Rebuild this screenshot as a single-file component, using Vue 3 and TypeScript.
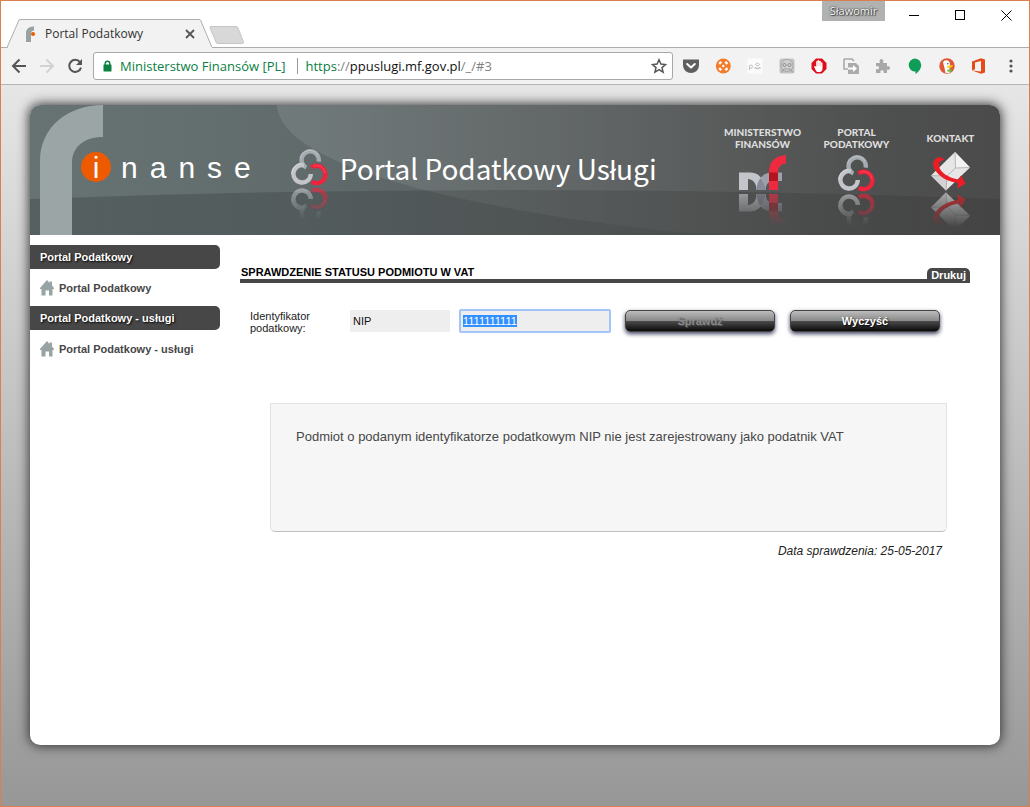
<script setup lang="ts">
import { onMounted, ref } from 'vue'

interface MenuSection {
  title: string
  link: string
}

const sections: MenuSection[] = [
  { title: 'Portal Podatkowy', link: 'Portal Podatkowy' },
  { title: 'Portal Podatkowy - usługi', link: 'Portal Podatkowy - usługi' },
]

const logoLetters: string[] = ['n', 'a', 'n', 's', 'e']

const idType = ref<string>('NIP')
const idValue = ref<string>('1111111111')
const idInput = ref<HTMLInputElement | null>(null)

function clearForm(): void {
  idValue.value = ''
  idInput.value?.focus()
}

onMounted(() => {
  idInput.value?.focus()
  idInput.value?.select()
})
</script>

<template>
  <div class="window">
    <!-- shared symbols -->
    <svg class="defs" aria-hidden="true">
      <defs>
        <linearGradient id="fade" x1="0" y1="0" x2="0" y2="1">
          <stop offset="0" stop-color="#fff" stop-opacity="0" />
          <stop offset="0.1" stop-color="#fff" stop-opacity="0" />
          <stop offset="1" stop-color="#fff" stop-opacity="0.7" />
        </linearGradient>
        <mask id="fadeMask" maskUnits="userSpaceOnUse" x="0" y="0" width="48" height="39">
          <rect width="48" height="39" fill="url(#fade)" />
        </mask>
        <symbol id="knot" viewBox="0 0 38 37" overflow="visible">
          <g fill="none" stroke-width="4.4">
            <path d="M15.3 18.6 A8.6 8.6 0 1 1 27.6 12.6" stroke="#a5abb1" />
            <path d="M13 16.3 A8.7 8.7 0 1 0 19.8 25" stroke="#c3c5c9" />
            <path d="M20.4 18.6 A8.7 8.7 0 1 1 20.8 32.6" stroke="#ef233c" />
            <path d="M22.6 17.2 A8.4 8.4 0 0 1 34 24" stroke="#ff5266" stroke-width="0.8" />
            <path d="M10 14.2 A10.5 10.5 0 0 0 0.8 25" stroke="#dfe0e2" stroke-width="0.8" />
            <path d="M9.5 9 A9.6 9.6 0 0 1 27 6" stroke="#c3c8cd" stroke-width="0.8" />
          </g>
        </symbol>
        <symbol id="mf" viewBox="0 0 48 36" overflow="visible">
          <path d="M17 35 C18 24 24 17.5 33 17.5 H43 V26 H34 C30 26 27 29 26.5 35 Z" fill="#9da0ab" />
          <path d="M0 17.5 H11 C20 17.5 25 24 26.5 35 H18 C17 28 14 24.5 9 24 V35 H0 Z" fill="#c3c5cb" />
          <path d="M21.5 23 C24.500 26 26 30 26.500 35 H17.500 C17.800 30 19 26 21.500 23 Z" fill="#868a99" />
          <path d="M30 35 V17 C30 7 36 0.5 47 0 V8.5 C42 9 39 12 39 18 V35 Z" fill="#ee2a40" />
          <path d="M30 17.5 H39 V26 H30 Z" fill="#b3141f" />
        </symbol>
        <symbol id="mail" viewBox="0 0 40 39" overflow="visible">
          <path d="M24 0 L39 15.5 L15 38.5 L0 23.5 Z" fill="#e6e6e6" />
          <path d="M24 0 L39 15.5 L25 16 Z" fill="#f3f3f3" />
          <path d="M0 23.5 L15 38.5 L17 25 Z" fill="#d2d2d2" />
          <path d="M24 0 L24.5 16 L39 15.5 M0 23.5 L16 24 L15 38.5 M24.5 16 L16 24" fill="none" stroke="#a9a9a9" stroke-width="0.8" />
          <path d="M13 8 C12 5 8 4.500 5 6.500 C1.500 9 1.500 14 4 18 C8 24.500 16 29.500 27 31 L26.500 36.500 L34.500 31.500 L30 23.500 L27.500 27.500 C18 26 9 20.500 8 14 C7.500 11 9 8.500 13 8 Z" fill="#ed1c24" />
        </symbol>
      </defs>
    </svg>

    <header class="tabstrip">
      <div class="tab">
        <svg class="tab-shape" viewBox="0 0 206 29" aria-hidden="true">
          <path d="M0 28.5 L12 1 L13 0.5 H192 L193.5 1 L205 28.5" fill="#f2f2f2" stroke="#adadad" />
          <rect x="1" y="28" width="204" height="1" fill="#f2f2f2" />
        </svg>
        <svg class="favicon" viewBox="0 0 16 16" aria-hidden="true">
          <path d="M1 16 V7 C1 3 4 0.5 9 0.5 V4.5 C7 4.5 6 5.5 6 8 V16 Z" fill="#98a2a3" />
          <circle cx="8" cy="8" r="2" fill="#ee5a00" />
        </svg>
        <span class="tab-title">Portal Podatkowy</span>
        <button class="tab-close" type="button" aria-label="Zamknij kartę">
          <svg viewBox="0 0 10 10"><path d="M1 1 L9 9 M9 1 L1 9" stroke="#555" stroke-width="1.8" /></svg>
        </button>
      </div>
      <button class="newtab" type="button" aria-label="Nowa karta">
        <svg viewBox="0 0 36 18">
          <path d="M2 0.5 H27 Q28.5 0.5 29 2 L34.5 16 Q35 17.5 33.5 17.5 H9 Q7.5 17.5 7 16 L1 2 Q0.5 0.5 2 0.5 Z" fill="#d8d8d8" stroke="#c6c6c6" />
        </svg>
      </button>
      <div class="win-controls">
        <span class="user">Sławomir</span>
        <button type="button" aria-label="Minimalizuj"><svg viewBox="0 0 11 11"><path d="M0 5.5 H10" stroke="#000" /></svg></button>
        <button type="button" aria-label="Maksymalizuj"><svg viewBox="0 0 11 11"><rect x="0.5" y="0.5" width="9" height="9" fill="none" stroke="#000" /></svg></button>
        <button type="button" aria-label="Zamknij"><svg viewBox="0 0 11 11"><path d="M0.5 0.5 L10.5 10.5 M10.5 0.5 L0.5 10.5" stroke="#000" /></svg></button>
      </div>
    </header>

    <nav class="toolbar" aria-label="Pasek narzędzi">
      <div class="nav-buttons">
        <button type="button" aria-label="Wstecz">
          <svg viewBox="0 0 16 16"><path d="M15 8 H2 M8.5 1.5 L2 8 L8.5 14.5" fill="none" stroke="#555" stroke-width="2" /></svg>
        </button>
        <button type="button" aria-label="Dalej" disabled>
          <svg viewBox="0 0 16 16"><path d="M1 8 H14 M7.5 1.5 L14 8 L7.5 14.5" fill="none" stroke="#d2d2d2" stroke-width="2" /></svg>
        </button>
        <button type="button" aria-label="Odśwież">
          <svg viewBox="0 0 16 16">
            <path d="M13 4.2 A6 6 0 1 0 14 9.6" fill="none" stroke="#555" stroke-width="2" />
            <path d="M15 1 V7 H9 Z" fill="#555" />
          </svg>
        </button>
      </div>
      <div class="omnibox">
        <svg class="lock" viewBox="0 0 9 12" aria-hidden="true">
          <path d="M2.2 5 V3.5 A2.3 2.3 0 0 1 6.8 3.5 V5" fill="none" stroke="#0b8043" stroke-width="1.4" />
          <rect x="0.5" y="4.5" width="8" height="7" rx="0.5" fill="#0b8043" />
        </svg>
        <span class="issuer">Ministerstwo Finansów [PL]</span>
        <span class="url"><span class="scheme">https</span>://<span class="host">ppuslugi.mf.gov.pl</span>/_/#3</span>
        <button class="star" type="button" aria-label="Dodaj zakładkę">
          <svg viewBox="0 0 16 16"><path d="M8 1.8 L9.9 6.1 L14.5 6.5 L11 9.6 L12.1 14.2 L8 11.7 L3.9 14.2 L5 9.6 L1.5 6.5 L6.1 6.1 Z" fill="none" stroke="#555" stroke-width="1.5" /></svg>
        </button>
      </div>
      <div class="extensions">
        <button type="button" aria-label="Pocket">
          <svg viewBox="0 0 16 16">
            <path d="M0 1.5 H16 V7 C16 12 12 15 8 15 S0 12 0 7 Z" fill="#5e5e60" />
            <path d="M4.2 6 L8 9.6 L11.8 6" fill="none" stroke="#fff" stroke-width="2" stroke-linecap="round" stroke-linejoin="round" />
          </svg>
        </button>
        <button type="button" aria-label="Koło ratunkowe">
          <svg viewBox="0 0 16 16">
            <circle cx="8.3" cy="8" r="7.5" fill="#f47b2a" />
            <g fill="none" stroke="#fff" stroke-width="2.4">
              <path d="M4.2 6 L6.2 3.8 M10.4 3.8 L12.4 6 M12.4 10 L10.4 12.2 M6.2 12.2 L4.2 10" />
            </g>
            <circle cx="8.3" cy="8" r="1.2" fill="#fff" />
          </svg>
        </button>
        <button type="button" aria-label="Rozszerzenie strony">
          <svg viewBox="0 0 16 16">
            <rect x="0.5" y="0.5" width="15" height="15" fill="#fbfbfb" />
            <path d="M2.5 12 V7.5 Q5.5 6 5.5 8.5 T2.5 10 M7 10 H14 M8 7 Q10.5 3 13 7 M8 9 Q10.5 13 13 9 M9 7.5 H12" fill="none" stroke="#c2c2c2" />
          </svg>
        </button>
        <button type="button" aria-label="Robot">
          <svg viewBox="0 0 16 16">
            <rect x="0.5" y="0.5" width="15" height="15" rx="2.5" fill="#c3c3c3" />
            <circle cx="8" cy="7.5" r="6" fill="#d2d2d2" stroke="#9c9c9c" stroke-width="0.8" />
            <circle cx="5.5" cy="7" r="1.6" fill="none" stroke="#8c8c8c" />
            <circle cx="10.5" cy="7" r="1.6" fill="none" stroke="#8c8c8c" />
            <path d="M5 11 H11 M2 14.5 L5 11 M14 14.5 L11 11" stroke="#999" />
          </svg>
        </button>
        <button type="button" aria-label="Blokada reklam">
          <svg viewBox="0 0 16 16">
            <path d="M5 0.5 H11 L15.5 5 V11 L11 15.5 H5 L0.5 11 V5 Z" fill="#dd0f1c" />
            <path d="M5 13 L3 8.500 Q4.200 7.200 5.200 9 V3.600 Q6 2.600 6.600 3.600 V2.500 Q7.400 1.700 8.200 2.500 V3 Q9.200 2.200 9.800 3.300 V4.600 Q10.800 3.800 11.500 5 V10 Q11.500 14 8.500 14 H7 Q5.500 14 5 13 Z" fill="#fff" />
            <path d="M6.7 4 V8 M8.2 3.5 V8 M9.8 4.5 V8" stroke="#e9a0a4" stroke-width="0.5" />
          </svg>
        </button>
        <button type="button" aria-label="Przenieś kartę">
          <svg viewBox="0 0 16 16">
            <path d="M1 1 H9 L11 3 M1 1 V11 H5" fill="none" stroke="#a9a9a9" stroke-width="1.6" />
            <path d="M5 5 H13 L16 8 V16 H5 Z" fill="#ababab" />
            <path d="M5 9.5 H10 V7 L14 10.5 L10 14 V11.5 H5 Z" fill="#fff" />
          </svg>
        </button>
        <button type="button" aria-label="Rozszerzenia">
          <svg viewBox="0 0 16 16"><path d="M1 5 H5 C4.5 4 4.3 1 6.5 1 S8.5 4 8 5 H12 V8.5 C13 8 15 8 15 10 S13 12 12 11.5 V15 H8.5 C9 13.5 8.5 12.3 7 12.3 S5 13.5 5.5 15 H1 V11 C3 11.5 4 11 4 9.7 S3 8 1 8.5 Z" fill="#a8a8a8" /></svg>
        </button>
        <button type="button" aria-label="Hangouts">
          <svg viewBox="0 0 16 16"><path d="M7.5 0.5 A6.6 6.6 0 0 1 14.2 7 C14.2 11 11.5 14 8.5 16 V13.6 H7.5 A6.6 6.6 0 0 1 7.5 0.5 Z" fill="#0f9d58" /></svg>
        </button>
        <button type="button" aria-label="DuckDuckGo">
          <svg viewBox="0 0 16 16">
            <circle cx="8" cy="8" r="7.7" fill="#de5833" />
            <path d="M4 4.500 Q4.500 1.800 8 2.200 Q11 3 11 7 L10.500 10 L11 14.5 Q8.5 15.500 6.5 14.8 L5 8 Z" fill="#fff" />
            <circle cx="8.8" cy="5.8" r="0.8" fill="#2d4f8e" />
            <path d="M8 8 Q11 7 14 7.2 Q13.500 9.800 8.5 10 Z" fill="#fdd20a" />
            <path d="M8 12 L12.5 10.8 V14 L8.5 13.5 Z" fill="#65bc46" />
          </svg>
        </button>
        <button type="button" aria-label="Office">
          <svg viewBox="0 0 16 16"><path d="M1 3.5 L10 0.3 L14 1.5 V14.5 L10 15.7 L1 12.5 L10 13.5 V3 L4 4.4 V11.2 L1 12.5 Z" fill="#e64a19" /></svg>
        </button>
      </div>
      <button class="menu" type="button" aria-label="Menu">
        <svg viewBox="0 0 16 16"><g fill="#555"><circle cx="8" cy="3" r="1.6" /><circle cx="8" cy="8" r="1.6" /><circle cx="8" cy="13" r="1.6" /></g></svg>
      </button>
    </nav>

    <main class="page">
      <div class="card">
        <div class="banner">
          <svg class="banner-bg" viewBox="0 0 970 130" preserveAspectRatio="none" aria-hidden="true">
            <defs>
              <linearGradient id="base" x1="0" y1="0" x2="1" y2="0">
                <stop offset="0" stop-color="#677373" />
                <stop offset="0.28" stop-color="#616b6c" />
                <stop offset="0.65" stop-color="#575a5a" />
                <stop offset="0.85" stop-color="#4f5050" />
                <stop offset="1" stop-color="#4b4b4b" />
              </linearGradient>
              <linearGradient id="sheen" gradientUnits="userSpaceOnUse" x1="247" y1="0" x2="860" y2="0">
                <stop offset="0" stop-color="#fff" stop-opacity="0.1" />
                <stop offset="1" stop-color="#fff" stop-opacity="0" />
              </linearGradient>
              <linearGradient id="floor" x1="0" y1="0" x2="1" y2="0">
                <stop offset="0" stop-color="#000" stop-opacity="0.17" />
                <stop offset="1" stop-color="#000" stop-opacity="0.09" />
              </linearGradient>
            </defs>
            <rect width="970" height="130" fill="url(#base)" />
            <path d="M247 0 C249 28 285 58 407 88 C500 110 620 127 700 130 H970 V0 Z" fill="url(#sheen)" />
            <path d="M0 94 Q485 76 970 94 V130 H0 Z" fill="url(#floor)" />
          </svg>
          <a class="logo" href="#" aria-label="finanse">
            <svg class="logo-f" viewBox="0 0 64 130" aria-hidden="true">
              <path d="M0 130 V56 C0 22 28 0 63 0 V32 C44 32 32 42 32 58 V130 Z" fill="#9ca5a6" />
            </svg>
            <span class="logo-i">i</span>
            <span class="logo-rest"><span v-for="(l, i) in logoLetters" :key="i">{{ l }}</span></span>
          </a>
          <div class="brand">
            <svg class="knot" viewBox="0 0 38 76" aria-hidden="true">
              <use href="#knot" width="38" height="37" />
              <g transform="translate(0 75) scale(1 -1)"><g mask="url(#fadeMask)"><use href="#knot" width="38" height="37" /></g></g>
            </svg>
            <h1>Portal Podatkowy Usługi</h1>
          </div>
          <ul class="links">
            <li>
              <a href="#">
                <span class="label">MINISTERSTWO<br />FINANSÓW</span>
                <svg width="48" height="76" viewBox="0 0 48 76" aria-hidden="true">
                  <use href="#mf" width="48" height="36" />
                  <g transform="translate(0 74) scale(1 -1)"><g mask="url(#fadeMask)"><use href="#mf" width="48" height="36" /></g></g>
                </svg>
              </a>
            </li>
            <li>
              <a href="#">
                <span class="label">PORTAL<br />PODATKOWY</span>
                <svg width="38" height="76" viewBox="0 0 38 76" aria-hidden="true">
                  <use href="#knot" width="38" height="37" />
                  <g transform="translate(0 75) scale(1 -1)"><g mask="url(#fadeMask)"><use href="#knot" width="38" height="37" /></g></g>
                </svg>
              </a>
            </li>
            <li>
              <a href="#">
                <span class="label">KONTAKT</span>
                <svg class="mail" width="40" height="80" viewBox="0 0 40 80" aria-hidden="true">
                  <use href="#mail" width="40" height="39" />
                  <g transform="translate(0 79) scale(1 -1)"><g mask="url(#fadeMask)"><use href="#mail" width="40" height="39" /></g></g>
                </svg>
              </a>
            </li>
          </ul>
        </div>

        <div class="body">
          <aside class="side">
            <section v-for="s in sections" :key="s.title">
              <h2>{{ s.title }}</h2>
              <a href="#">
                <svg viewBox="0 0 14 16" aria-hidden="true"><path d="M7 0 L9.5 3 V1.5 H12 V5.5 L14 8 V9 H12.5 V15.5 H9 V10.5 H5.5 V15.5 H1.5 V9 H0 V8 Z" fill="#98a3a3" /></svg>
                <span>{{ s.link }}</span>
              </a>
            </section>
          </aside>

          <section class="content">
            <div class="title-row">
              <h2>SPRAWDZENIE STATUSU PODMIOTU W VAT</h2>
              <a class="print" href="#">Drukuj</a>
            </div>
            <form class="form" @submit.prevent>
              <label for="tax-id">Identyfikator podatkowy:</label>
              <select v-model="idType" class="type" aria-label="Rodzaj identyfikatora">
                <option>NIP</option>
              </select>
              <input id="tax-id" ref="idInput" v-model="idValue" class="value" type="text" />
              <button class="action" type="submit" disabled>Sprawdź</button>
              <button class="action" type="button" @click="clearForm">Wyczyść</button>
            </form>
            <div class="result">
              <p>Podmiot o podanym identyfikatorze podatkowym NIP nie jest zarejestrowany jako podatnik VAT</p>
            </div>
            <p class="date">Data sprawdzenia: 25-05-2017</p>
          </section>
        </div>
      </div>
    </main>
  </div>
</template>

<style>
html,
body {
  margin: 0;
}
</style>

<style scoped>
* {
  box-sizing: border-box;
}

.window {
  display: flex;
  flex-direction: column;
  min-height: 100vh;
  border: 1px solid #da8050;
  background: #fff;
  font-family: "Liberation Sans", Arial, sans-serif;
}

button {
  padding: 0;
  border: 0;
  background: none;
  font-family: inherit;
}

svg {
  display: block;
  flex: none;
}

.defs {
  position: absolute;
  width: 0;
  height: 0;
}

h1,
h2,
p,
ul {
  margin: 0;
  padding: 0;
}

a {
  color: inherit;
  text-decoration: none;
}

/* Tab strip */
.tabstrip {
  display: flex;
  align-items: flex-end;
  height: 47px;
  padding-left: 6px;
  box-shadow: inset 0 -1px #adadad;
  font-family: "Open Sans", "Noto Sans", sans-serif;
}

.tab {
  position: relative;
  display: flex;
  align-items: center;
  width: 206px;
  height: 29px;
  padding: 0 18px 0 18px;
}

.tab-shape {
  position: absolute;
  inset: 0;
  width: 206px;
  height: 29px;
}

.favicon {
  position: relative;
  width: 16px;
  height: 16px;
}

.tab-title {
  position: relative;
  flex: 1;
  margin-left: 4px;
  color: #333;
  font-size: 12px;
  line-height: 16px;
}

.tab-close {
  position: relative;
}

.tab-close svg {
  width: 10px;
  height: 10px;
}

.newtab {
  margin: 0 0 4px -4px;
}

.newtab svg {
  width: 36px;
  height: 18px;
}

.win-controls {
  display: flex;
  align-self: flex-start;
  align-items: flex-start;
  margin-left: auto;
}

.user {
  width: 63px;
  height: 20px;
  margin-right: 6px;
  background: #b1b1b1;
  color: #fff;
  font-size: 11px;
  line-height: 20px;
  text-align: center;
  text-shadow: 0 0 2px #333, 0 0 1px #333, 1px 1px 1px #555;
}

.win-controls button {
  display: flex;
  align-items: center;
  justify-content: center;
  width: 46px;
  height: 29px;
}

.win-controls svg {
  width: 11px;
  height: 11px;
}

/* Toolbar */
.toolbar {
  display: flex;
  align-items: center;
  height: 37px;
  padding: 0 10px;
  border-bottom: 1px solid #b5b5b5;
  background: #f2f2f2;
}

.nav-buttons {
  display: flex;
  gap: 12px;
  margin-right: 10px;
}

.nav-buttons svg,
.extensions svg,
.menu svg,
.star svg {
  width: 16px;
  height: 16px;
}

.omnibox {
  display: flex;
  flex: 1;
  align-items: center;
  height: 28px;
  padding: 0 5px 0 9px;
  border: 1px solid #a8a8a8;
  border-radius: 3px;
  background: #fff;
  font-family: "Open Sans", "Noto Sans", sans-serif;
  font-size: 13px;
  line-height: 18px;
}

.lock {
  width: 9px;
  height: 12px;
}

.issuer {
  margin-left: 8px;
  padding-right: 11px;
  border-right: 1px solid #9a9a9a;
  color: #0b8043;
  line-height: 16px;
  white-space: nowrap;
}

.url {
  flex: 1;
  margin-left: 8px;
  color: #808080;
  white-space: nowrap;
}

.scheme {
  color: #0b8043;
}

.host {
  color: #111;
}

.extensions {
  display: flex;
  gap: 16px;
  margin: 0 16px 0 10px;
}

/* Page */
.page {
  flex: 1;
  padding: 20px 29px 61px;
  background: linear-gradient(#e6e6e6, #979797);
}

.card {
  overflow: hidden;
  border-radius: 10px;
  background: #fff;
  box-shadow: 0 0 12px 1px #333;
}

.banner {
  position: relative;
  display: flex;
  height: 130px;
  color: #fff;
}

.banner-bg {
  position: absolute;
  inset: 0;
  width: 100%;
  height: 100%;
}

.logo,
.brand,
.links {
  position: relative;
  display: flex;
}

.logo {
  align-items: flex-start;
  padding-left: 10px;
}

.logo-f {
  width: 64px;
  height: 130px;
}

.logo-i,
.logo-rest {
  margin-top: 47px;
  font-size: 30px;
  line-height: 32px;
}

.logo-i {
  width: 30px;
  height: 30px;
  margin-left: -23px;
  border-radius: 50%;
  background: #ee5a00;
  text-align: center;
}

.logo-rest {
  display: flex;
  gap: 12px;
  margin-left: 10px;
}

.brand {
  align-items: flex-start;
  margin-left: 40px;
}

.knot {
  width: 38px;
  height: 76px;
  margin-top: 44px;
}

h1 {
  margin: 43px 0 0 11px;
  font-family: "Noto Sans CJK SC", sans-serif;
  font-size: 28px;
  font-weight: 400;
  line-height: 40px;
  white-space: nowrap;
}

.links {
  gap: 7px;
  margin-left: auto;
  padding: 22px 6px 0 0;
  list-style: none;
}

.links a {
  display: flex;
  flex-direction: column;
  align-items: center;
  width: 87px;
}

.label {
  display: flex;
  align-items: center;
  height: 22px;
  margin-bottom: 6px;
  color: #dedede;
  font-family: Lato, sans-serif;
  font-size: 10px;
  font-weight: 900;
  line-height: 12px;
  text-align: center;
}

.links .mail {
  margin-top: -3px;
}

/* Columns */
.body {
  display: flex;
  gap: 20px;
  min-height: 510px;
  padding: 10px 30px 0 0;
}

.side {
  width: 190px;
  font-size: 11px;
  font-weight: 700;
}

.side h2 {
  height: 24px;
  padding-left: 10px;
  border-radius: 0 5px 5px 0;
  background: #474747;
  color: #fff;
  font-size: 11px;
  line-height: 24px;
  text-shadow: 1px 1px 2px #000;
}

.side a {
  display: flex;
  gap: 5px;
  align-items: center;
  height: 37px;
  padding-left: 10px;
  color: #474747;
}

.side svg {
  width: 14px;
  height: 16px;
}

.content {
  flex: 1;
  min-width: 0;
}

.title-row {
  display: flex;
  align-items: flex-end;
  justify-content: space-between;
  height: 38px;
  border-bottom: 4px solid #474747;
}

.title-row h2 {
  padding-left: 1px;
  color: #000;
  font-size: 11px;
  line-height: 14px;
}

.print {
  height: 11px;
  padding: 0 4px;
  border-radius: 5px 5px 0 0;
  background: #474747;
  color: #fff;
  font-size: 11px;
  font-weight: 700;
  line-height: 15px;
}

.form {
  display: flex;
  align-items: flex-start;
  padding: 26px 30px 0 10px;
}

.form label {
  width: 100px;
  margin-top: 1px;
  color: #222;
  font-size: 11px;
  line-height: 12px;
}

.type,
.value {
  font-family: inherit;
  font-size: 11px;
}

.type {
  width: 100px;
  height: 22px;
  margin: 1px 9px 0 0;
  padding: 0 3px;
  border: 0;
  border-radius: 0;
  background: #eee;
  color: #111;
  appearance: none;
}

.value {
  width: 152px;
  height: 24px;
  margin-right: 14px;
  padding: 0 2px;
  border: 2px solid #a3c3fb;
  border-radius: 2px;
  outline: 0;
  background: #eee;
  color: #111;
}

.value::selection {
  background: #3390ff;
  color: #fff;
}

.action {
  flex: 1;
  height: 22px;
  margin-top: 1px;
  border: 1px solid #444;
  border-radius: 5px;
  background: linear-gradient(#bcbcbc, #8a8a8a 48%, #4a4a4a 52%, #0a0a0a);
  box-shadow: 0 2px 4px #446;
  color: #fff;
  font-size: 11px;
  font-weight: 700;
  text-shadow: 1px 1px 2px #000;
}

.action + .action {
  margin-left: 15px;
}

.action:disabled {
  color: #8a8a8a;
  text-shadow: 1px 1px 1px #555;
}

.result {
  height: 129px;
  margin: 69px 23px 0 30px;
  padding: 25px;
  border: 1px solid #e2e2e2;
  border-bottom-color: #bfbfbf;
  border-radius: 0 0 5px 5px;
  background: #f6f6f6;
  color: #474747;
  font-size: 13px;
  line-height: 16px;
}

.date {
  margin: 11px 28px 0 0;
  color: #222;
  font-size: 12px;
  font-style: italic;
  line-height: 16px;
  text-align: right;
}
</style>
